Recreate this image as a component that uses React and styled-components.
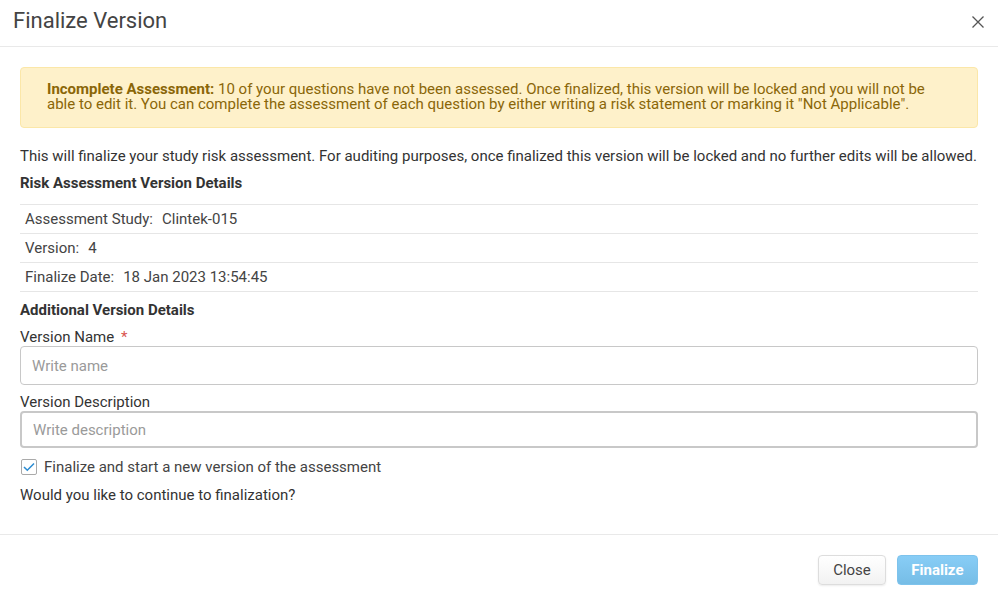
import React, { useState } from "react";
import styled, { createGlobalStyle } from "styled-components";

const GlobalStyle = createGlobalStyle`
  html, body {
    margin: 0;
    padding: 0;
    background: #fff;
    font-family: Roboto, "Liberation Sans", Arial, sans-serif;
    color: #333;
  }
  * { box-sizing: border-box; }
`;

const App = () => {
    const [checked, setChecked] = useState(true);

    return (
        <>
            <GlobalStyle />
            <Modal>
                <Header>
                    <Title>Finalize Version</Title>
                    <CloseX aria-label="close">
                        <svg width="14" height="14" viewBox="0 0 14 14">
                            <path d="M1.5 1.5 L12.5 12.5 M12.5 1.5 L1.5 12.5" stroke="#555" strokeWidth="1.3" fill="none" />
                        </svg>
                    </CloseX>
                </Header>

                <Body>
                    <Alert>
                        <strong>Incomplete Assessment:</strong> 10 of your questions have not been assessed. Once finalized, this version will be locked and you will not be
                        able to edit it. You can complete the assessment of each question by either writing a risk statement or marking it "Not Applicable".
                    </Alert>

                    <Intro>
                        This will finalize your study risk assessment. For auditing purposes, once finalized this version will be locked and no further edits will be allowed.
                    </Intro>

                    <SectionTitle>Risk Assessment Version Details</SectionTitle>
                    <DetailTable>
                        <DetailRow><Label>Assessment Study:</Label>Clintek-015</DetailRow>
                        <DetailRow><Label>Version:</Label>4</DetailRow>
                        <DetailRow><Label>Finalize Date:</Label>18 Jan 2023 13:54:45</DetailRow>
                    </DetailTable>

                    <SectionTitle $top={9}>Additional Version Details</SectionTitle>
                    <FieldLabel $top={9}>Version Name <Required>*</Required></FieldLabel>
                    <Input placeholder="Write name" $height={39} />
                    <FieldLabel $top={8}>Version Description</FieldLabel>
                    <Input placeholder="Write description" $height={37} $thick />

                    <CheckRow onClick={() => setChecked((c) => !c)}>
                        <Box>
                            {checked && (
                                <svg width="12" height="10" viewBox="0 0 12 10">
                                    <path d="M1 5 L4.3 8.3 L11 1.5" stroke="#2a8bd1" strokeWidth="1.5" fill="none" />
                                </svg>
                            )}
                        </Box>
                        Finalize and start a new version of the assessment
                    </CheckRow>

                    <Question>Would you like to continue to finalization?</Question>
                </Body>

                <Footer>
                    <Button>Close</Button>
                    <Button $primary>Finalize</Button>
                </Footer>
            </Modal>
        </>
    );
};

export default App;

const Modal = styled.div`
  width: 998px;
  height: 604px;
  display: flex;
  flex-direction: column;
  background: #fff;
`;

const Header = styled.div`
  height: 47px;
  display: flex;
  align-items: center;
  justify-content: space-between;
  padding: 0 13px 6px 13px;
  border-bottom: 1px solid #e9e9e9;
`;

const Title = styled.h1`
  margin: 0;
  font-size: 22px;
  font-weight: 400;
  color: #444;
`;

const CloseX = styled.button`
  border: none;
  background: none;
  padding: 0;
  margin-top: 4px;
  display: flex;
  cursor: pointer;
`;

const Body = styled.div`
  flex: 1;
  padding: 20px 20px 0 20px;
  border-bottom: 1px solid #e9e9e9;
`;

const Alert = styled.div`
  background: #fef1ca;
  border: 1px solid #fbe7a8;
  border-radius: 4px;
  color: #8a6608;
  font-size: 15px;
  line-height: 15px;
  padding: 14px 26px 15px 26px;

  strong {
    font-weight: 700;
  }
`;

const Intro = styled.p`
  margin: 19px 0 0 0;
  font-size: 15px;
  line-height: 18px;
  color: #333;
`;

const SectionTitle = styled.h3`
  margin: ${({ $top }) => $top || 9}px 0 0 0;
  font-size: 15px;
  line-height: 18px;
  font-weight: 700;
  color: #333;
`;

const DetailTable = styled.div`
  margin-top: 12px;
  border-top: 1px solid #e6e6e6;
`;

const DetailRow = styled.div`
  height: 29px;
  display: flex;
  align-items: center;
  padding-left: 5px;
  border-bottom: 1px solid #e6e6e6;
  font-size: 15px;
  color: #444;
`;

const Label = styled.span`
  margin-right: 9px;
`;

const FieldLabel = styled.div`
  margin-top: ${({ $top }) => $top || 8}px;
  font-size: 15px;
  line-height: 18px;
  color: #333;
`;

const Required = styled.span`
  color: #d9534f;
  margin-left: 3px;
`;

const Input = styled.input`
  display: block;
  width: 100%;
  height: ${({ $height }) => $height}px;
  margin-top: 0;
  padding: 0 11px;
  border: ${({ $thick }) => ($thick ? "2px solid #c8c8c8" : "1px solid #c8c8c8")};
  border-radius: 4px;
  font-family: Roboto, "Liberation Sans", Arial, sans-serif;
  font-size: 15px;
  color: #333;
  outline: none;

  &::placeholder {
    color: #9a9a9a;
  }
`;

const CheckRow = styled.label`
  display: flex;
  align-items: center;
  gap: 7px;
  margin-top: 10px;
  margin-left: 1px;
  font-size: 15px;
  color: #444;
  cursor: pointer;
`;

const Box = styled.span`
  width: 16px;
  height: 16px;
  border: 1px solid #aaa;
  border-radius: 2px;
  display: flex;
  align-items: center;
  justify-content: center;
  background: #fff;
`;

const Question = styled.p`
  margin: 10px 0 0 0;
  font-size: 15px;
  line-height: 18px;
  color: #333;
`;

const Footer = styled.div`
  height: 69px;
  display: flex;
  justify-content: flex-end;
  align-items: flex-start;
  gap: 11px;
  padding: 20px 20px 0 0;
`;

const Button = styled.button`
  height: 30px;
  padding: 0 ${({ $primary }) => ($primary ? 13.5 : 14)}px;
  border-radius: 4px;
  font-family: Roboto, "Liberation Sans", Arial, sans-serif;
  font-size: 15px;
  font-weight: ${({ $primary }) => ($primary ? 700 : 400)};
  color: ${({ $primary }) => ($primary ? "#fff" : "#444")};
  border: 1px solid ${({ $primary }) => ($primary ? "#7ec3ec" : "#ddd")};
  background: ${({ $primary }) =>
        $primary ? "linear-gradient(#88cdf6, #76bde6)" : "linear-gradient(#fff, #f2f2f2)"};
  box-shadow: ${({ $primary }) => ($primary ? "none" : "0 1px 2px rgba(0,0,0,0.08)")};
  cursor: pointer;
`;
